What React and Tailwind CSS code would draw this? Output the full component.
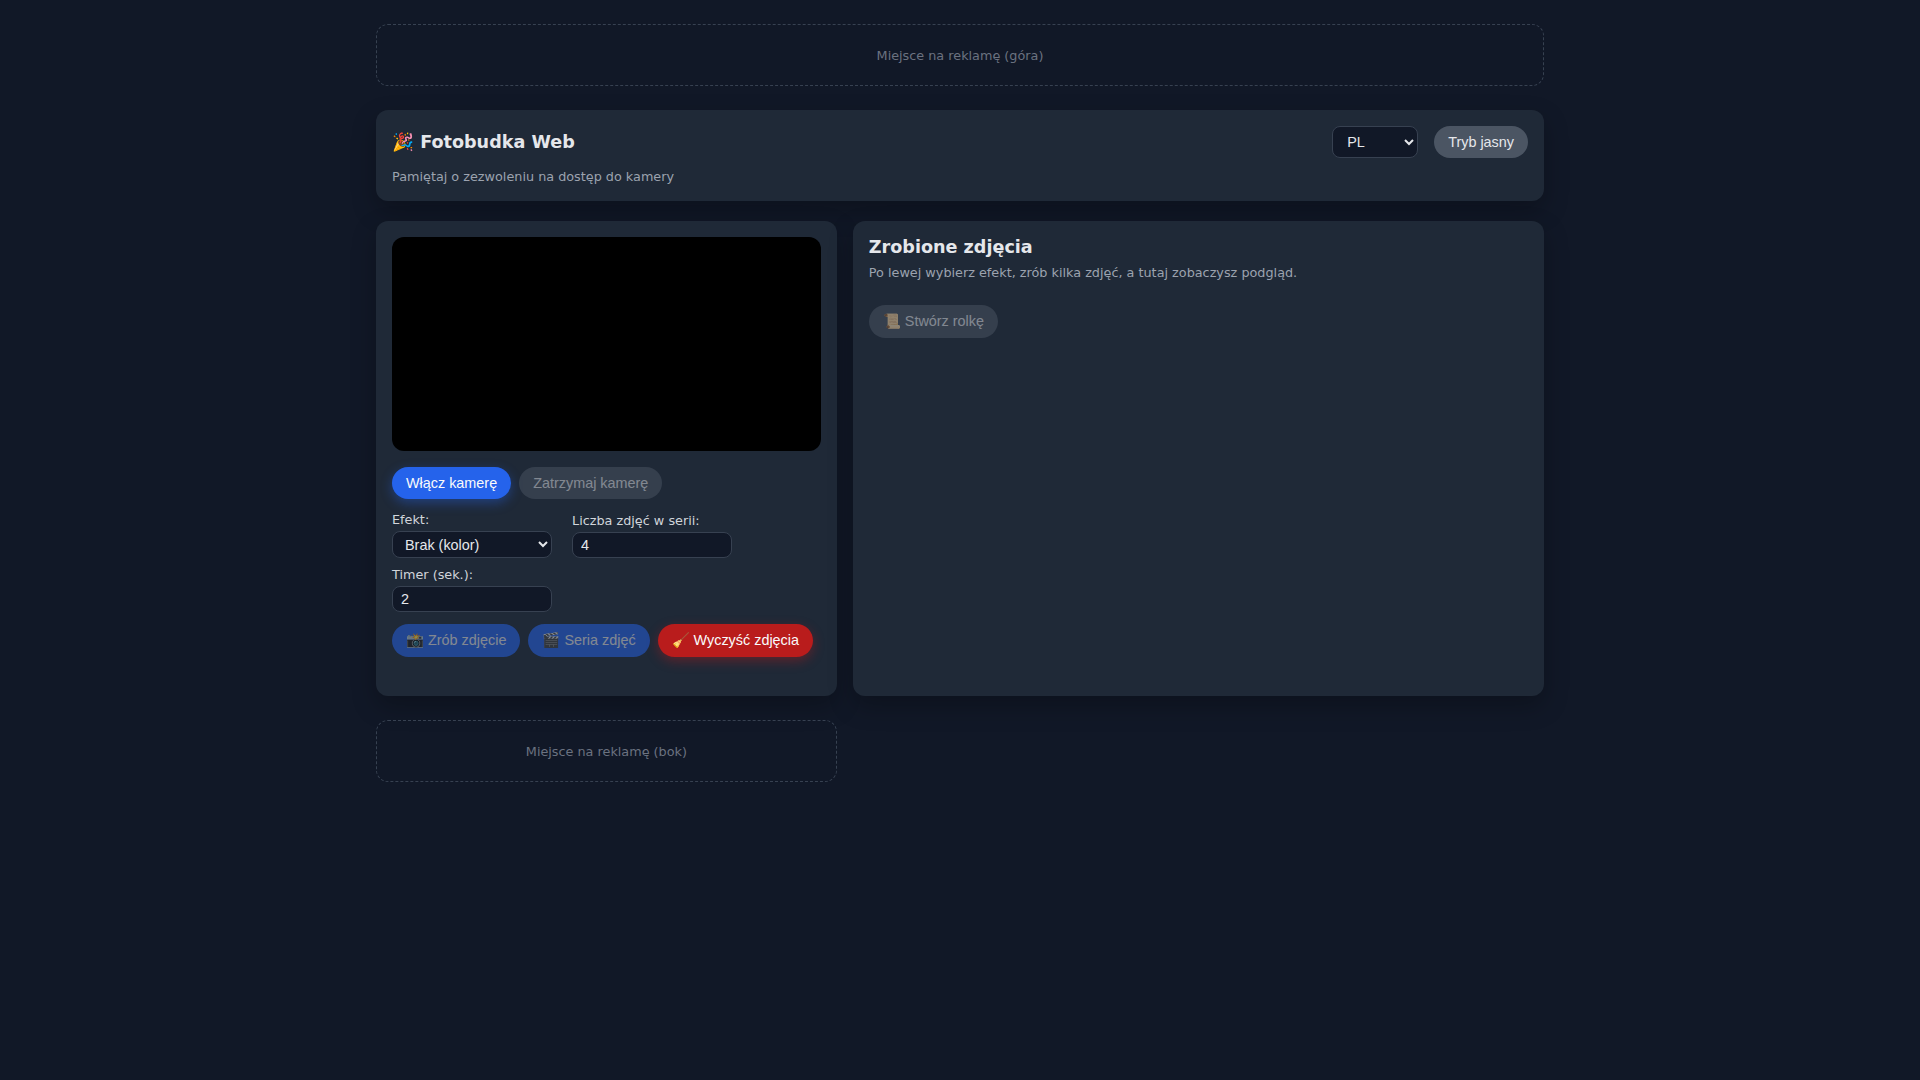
const Ad = ({ children, className = '' }) => (
  <div className={`h-[62px] pt-px flex items-center justify-center rounded-xl border border-dashed border-[#374151] text-[12.8px] leading-normal text-[#6b7280] ${className}`}>
    {children}
  </div>
);

const btn = 'rounded-full px-3.5 py-2 text-[14.4px] leading-[normal] font-["Liberation_Sans",Arial,sans-serif] whitespace-nowrap';
const field = 'w-40 rounded-lg border border-[#374151] bg-[#111827] text-[14.4px] leading-[normal] text-[#e5e7eb] font-["Liberation_Sans",Arial,sans-serif]';

const Field = ({ label, children }) => (
  <label className="flex flex-col text-[12.8px] leading-normal text-[#d1d5db]">
    <span className="mb-0.5">{label}</span>
    {children}
  </label>
);

export default function App() {
  return (
    <div className="min-h-screen bg-[#111827] text-[#e5e7eb] font-['DejaVu_Sans',sans-serif]">
      <div className="mx-auto max-w-[1200px] px-4 py-6">
        <Ad className="mb-6">Miejsce na reklamę (góra)</Ad>

        <header className="mb-5 rounded-xl bg-[#1f2937] p-4 shadow-[0_10px_25px_rgba(0,0,0,0.25)]">
          <div className="flex items-center justify-between">
            <h1 className="text-[17.6px] leading-normal font-bold">🎉 Fotobudka Web</h1>
            <div className="flex items-center gap-4">
              <select className={`${field} w-[86px] h-8 px-2.5`} defaultValue="PL">
                <option>PL</option>
                <option>EN</option>
              </select>
              <button className={`${btn} bg-[#4b5563] text-[#e5e7eb]`}>Tryb jasny</button>
            </div>
          </div>
          <p className="mt-[9px] -mb-px text-[12.8px] leading-normal text-[#9ca3af]">Pamiętaj o zezwoleniu na dostęp do kamery</p>
        </header>

        <div className="grid grid-cols-[2fr_3fr] gap-4">
          <section className="rounded-xl bg-[#1f2937] p-4 pb-[39px] shadow-[0_10px_25px_rgba(0,0,0,0.25)]">
            <div className="h-[214px] w-full rounded-xl bg-black" />

            <div className="mt-4 flex gap-2">
              <button className={`${btn} bg-[#2563eb] text-[#f9fafb] shadow-[0_4px_12px_rgba(37,99,235,0.4)]`}>Włącz kamerę</button>
              <button className={`${btn} bg-[#4b5563] text-[#e5e7eb] opacity-50`}>Zatrzymaj kamerę</button>
            </div>

            <div className="mt-[11px] flex flex-wrap items-center gap-x-5 gap-y-[6.5px]">
              <Field label="Efekt:">
                <select className={`${field} h-[27px] px-2`} defaultValue="none">
                  <option value="none">Brak (kolor)</option>
                </select>
              </Field>
              <Field label="Liczba zdjęć w serii:">
                <input type="number" defaultValue={4} className={`${field} h-[26px] px-2`} />
              </Field>
              <Field label="Timer (sek.):">
                <input type="number" defaultValue={2} className={`${field} h-[26px] px-2`} />
              </Field>
            </div>

            <div className="mt-3 flex gap-2">
              <button className={`${btn} bg-[#2563eb] text-[#e5e7eb] opacity-50`}>📸 Zrób zdjęcie</button>
              <button className={`${btn} bg-[#2563eb] text-[#e5e7eb] opacity-50`}>🎬 Seria zdjęć</button>
              <button className={`${btn} bg-[#b91c1c] text-[#f9fafb] shadow-[0_4px_12px_rgba(185,28,28,0.4)]`}>🧹 Wyczyść zdjęcia</button>
            </div>
          </section>

          <section className="rounded-xl bg-[#1f2937] p-4 shadow-[0_10px_25px_rgba(0,0,0,0.25)]">
            <h2 className="text-[17.6px] leading-[20.4px] font-bold">Zrobione zdjęcia</h2>
            <p className="mt-[5px] text-[12.8px] leading-normal text-[#9ca3af]">Po lewej wybierz efekt, zrób kilka zdjęć, a tutaj zobaczysz podgląd.</p>
            <button className={`${btn} mt-[23px] bg-[#4b5563] text-[#e5e7eb] opacity-50`}>📜 Stwórz rolkę</button>
          </section>
        </div>

        <div className="mt-6 grid grid-cols-[2fr_3fr] gap-4">
          <Ad>Miejsce na reklamę (bok)</Ad>
        </div>
      </div>
    </div>
  );
}
